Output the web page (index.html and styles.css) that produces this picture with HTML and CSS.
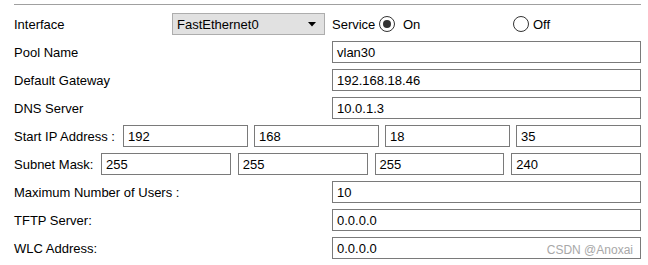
FILE: index.html
```html
<!DOCTYPE html>
<html>
<head>
<meta charset="utf-8">
<link rel="stylesheet" href="styles.css">
</head>
<body>
<div class="form">
  <div class="row">
    <span class="label first">Interface</span>
    <div class="select">
      <span class="select-text">FastEthernet0</span>
      <svg class="arrow" width="8" height="5" viewBox="0 0 8 5"><path d="M0 0 H8 L4 4.5 Z" fill="#000"/></svg>
    </div>
    <span class="service">Service</span>
    <span class="radio checked"><span class="dot"></span></span>
    <span class="radio-label on">On</span>
    <span class="radio"></span>
    <span class="radio-label off">Off</span>
  </div>
  <div class="row">
    <span class="label">Pool Name</span>
    <div class="field">vlan30</div>
  </div>
  <div class="row">
    <span class="label">Default Gateway</span>
    <div class="field">192.168.18.46</div>
  </div>
  <div class="row">
    <span class="label">DNS Server</span>
    <div class="field">10.0.1.3</div>
  </div>
  <div class="row">
    <span class="label-inline start">Start IP Address :</span>
    <div class="quad gap6">
      <div class="field">192</div>
      <div class="field">168</div>
      <div class="field">18</div>
      <div class="field">35</div>
    </div>
  </div>
  <div class="row">
    <span class="label-inline mask">Subnet Mask:</span>
    <div class="quad gap7">
      <div class="field">255</div>
      <div class="field">255</div>
      <div class="field">255</div>
      <div class="field">240</div>
    </div>
  </div>
  <div class="row">
    <span class="label">Maximum Number of Users :</span>
    <div class="field">10</div>
  </div>
  <div class="row">
    <span class="label">TFTP Server:</span>
    <div class="field">0.0.0.0</div>
  </div>
  <div class="row">
    <span class="label">WLC Address:</span>
    <div class="field wlc">0.0.0.0<span class="watermark">CSDN @Anoxai</span></div>
  </div>
</div>
</body>
</html>
```
FILE: styles.css
```css
html, body {
  margin: 0;
  padding: 0;
  background: #fff;
}
body {
  font-family: "Liberation Sans", Arial, sans-serif;
  font-size: 13px;
  color: #000;
}
.form {
  margin: 4px 7px 0 14px;
  border-top: 1px solid #a0a0a0;
  padding-top: 8px;
  display: flex;
  flex-direction: column;
  gap: 6px;
}
.row {
  display: flex;
  align-items: center;
  height: 22px;
}
.label {
  width: 318px;
  flex: none;
  white-space: nowrap;
}
.label.first {
  width: 158px;
}
.label-inline {
  flex: none;
  white-space: nowrap;
}
.label-inline.start {
  width: 109px;
}
.label-inline.mask {
  width: 87px;
}
.select {
  width: 153px;
  height: 22px;
  box-sizing: border-box;
  background: #e1e1e1;
  border: 1px solid #adadad;
  display: flex;
  align-items: center;
  padding-left: 4px;
  flex: none;
}
.select-text {
  flex: 1;
}
.arrow {
  margin-right: 8px;
  display: block;
}
.service {
  margin-left: 7px;
  width: 47px;
  flex: none;
}
.radio {
  width: 16px;
  height: 16px;
  box-sizing: border-box;
  border: 1px solid #333;
  border-radius: 50%;
  display: flex;
  align-items: center;
  justify-content: center;
  flex: none;
}
.radio .dot {
  width: 8px;
  height: 8px;
  border-radius: 50%;
  background: #333;
}
.radio-label.on {
  margin-left: 8px;
  width: 110px;
  flex: none;
}
.radio-label.off {
  margin-left: 4px;
}
.field {
  flex: 1;
  height: 22px;
  box-sizing: border-box;
  border: 1px solid #7a7a7a;
  background: #fff;
  padding-left: 4px;
  display: flex;
  align-items: center;
  min-width: 0;
}
.quad {
  flex: 1;
  display: flex;
  height: 22px;
}
.quad.gap6 {
  gap: 6px;
}
.quad.gap7 {
  gap: 7px;
}
.wlc {
  position: relative;
}
.watermark {
  position: absolute;
  right: 7px;
  top: 5px;
  font-size: 12px;
  color: #a8a8a8;
}
```
